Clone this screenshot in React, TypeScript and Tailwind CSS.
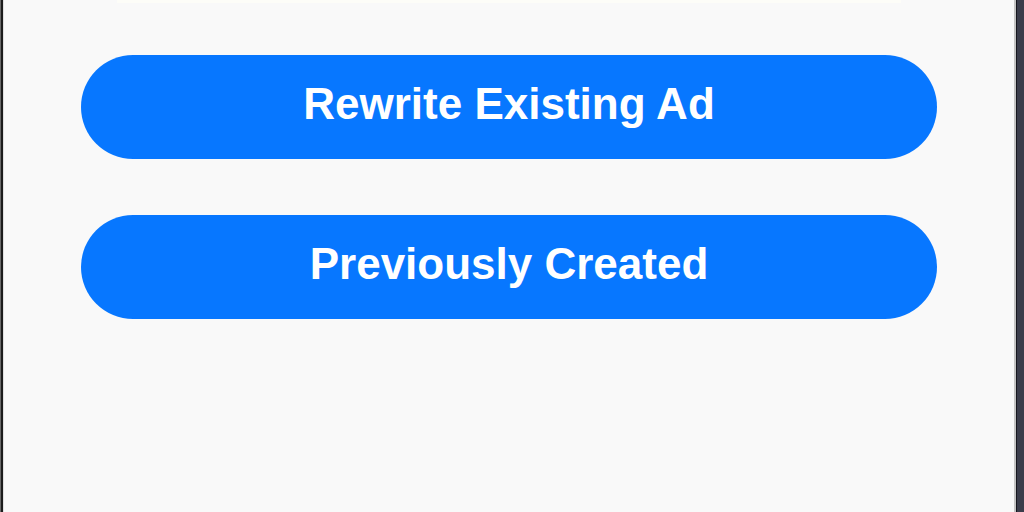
import React from "react";

export default function App() {
  return (
    <div className="flex w-[1024px] h-[512px] overflow-hidden bg-[#f9f9f9]" style={{ fontFamily: '"Liberation Sans", Arial, sans-serif' }}>
      <div className="w-[1px] h-full bg-[#6b6b6b]" />
      <div className="w-[2px] h-full bg-[#1c1c1c]" />
      <div className="w-[1px] h-full bg-[#e0e0e0]" />
      <div className="flex-1 flex flex-col px-[77px]">
        <div className="mx-[36px] h-[3px] bg-[#fdfdf8]" />
        <div className="flex flex-col gap-[56px] mt-[52px]">
          <button className="h-[104px] w-full rounded-full bg-[#0777ff] text-white font-bold text-[44px] leading-none flex items-center justify-center pb-[6px]">
            Rewrite Existing Ad
          </button>
          <button className="h-[104px] w-full rounded-full bg-[#0777ff] text-white font-bold text-[44px] leading-none flex items-center justify-center pb-[6px]">
            Previously Created
          </button>
        </div>
      </div>
      <div className="w-[2px] h-full bg-[#c4c4c4]" />
      <div className="w-[1px] h-full bg-[#16161e]" />
      <div className="w-[7px] h-full bg-[#3a3c4a]" />
    </div>
  );
}
